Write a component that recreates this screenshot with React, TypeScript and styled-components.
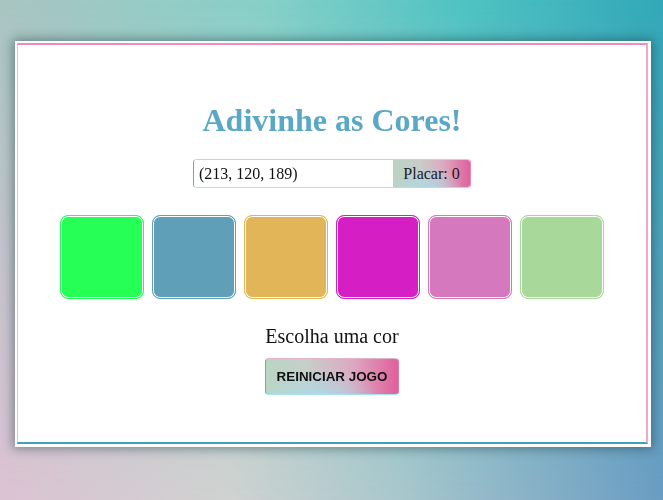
import React from 'react';
import styled, { createGlobalStyle } from 'styled-components';

const GlobalStyle = createGlobalStyle`
  html, body {
    margin: 0;
    padding: 0;
    min-height: 100%;
  }
  body {
    height: 500px;
    overflow: hidden;
    font-family: "Liberation Serif", "Times New Roman", serif;
    background: linear-gradient(to right, #a9c5c2 0%, #86d0c8 40%, #4fc3c3 70%, #32a8b8 100%);
    position: relative;
  }
  body::before {
    content: '';
    position: fixed;
    inset: 0;
    background: linear-gradient(to right, #dcc2d3 0%, #cfd2d0 35%, #a9c7cc 60%, #6a9cc2 100%);
    -webkit-mask-image: linear-gradient(to bottom, transparent 0%, rgba(0,0,0,0.5) 50%, #000 100%);
    mask-image: linear-gradient(to bottom, transparent 0%, rgba(0,0,0,0.5) 50%, #000 100%);
    z-index: 0;
  }
  #root {
    position: relative;
    z-index: 1;
  }
`;

const Page = styled.div`
  display: flex;
  padding: 41px 0 0 15px;
`;

const Card = styled.div`
  width: 636px;
  box-sizing: border-box;
  background: #fff;
  padding: 2px 3px 3px 2px;
  box-shadow: 0 0 10px 2px rgba(20, 50, 60, 0.45);
`;

const Frame = styled.div`
  border-style: solid;
  border-width: 2px 2px 2px 1px;
  border-color: #f08cb6 #f3a6cb #3fa0b6 #9fdff0;
  padding: 57px 0 47px;
  display: flex;
  flex-direction: column;
  align-items: center;
`;

const Title = styled.h1`
  margin: 0;
  font-size: 32px;
  line-height: 37px;
  font-weight: bold;
  color: #5aa8c6;
`;

const Controls = styled.div`
  margin-top: 20px;
  display: flex;
  height: 29px;
  box-sizing: border-box;
  border: 1px solid;
  border-color: #f4bcd2 #ee89b6 #a6e2ef #5ab0c8;
  border-radius: 4px;
  overflow: hidden;
`;

const ColorInput = styled.input`
  width: 199px;
  box-sizing: border-box;
  border: none;
  outline: none;
  padding: 0 5px;
  font-family: "Liberation Serif", serif;
  font-size: 16px;
  color: #111;
  background: #fff;
`;

const Score = styled.div`
  width: 77px;
  display: flex;
  align-items: center;
  justify-content: center;
  font-size: 16px;
  color: #1a1a1a;
  background:
    radial-gradient(ellipse at 45% 120%, rgba(166, 222, 236, 0.9) 0%, rgba(166, 222, 236, 0) 60%),
    linear-gradient(to right, #b9d3c3 0%, #c9ccc8 35%, #dcaac0 65%, #e0609c 100%);
`;

const Grid = styled.div`
  margin-top: 27px;
  display: flex;
  gap: 8px;
`;

const Swatch = styled.div<{ $color: string }>`
  width: 84px;
  height: 84px;
  box-sizing: border-box;
  border-radius: 8px;
  border: 1px solid ${p => p.$color};
  background: ${p => p.$color};
  box-shadow: inset 0 0 0 1px #fff;
  cursor: pointer;
`;

const Message = styled.p`
  margin: 26px 0 0;
  font-size: 20px;
  line-height: 23px;
  color: #111;
`;

const ResetButton = styled.button`
  margin-top: 10px;
  width: 134px;
  height: 37px;
  box-sizing: border-box;
  border: 1px solid;
  border-color: #e2b4c8 #e07aa8 #a6e2ef #5ab0c8;
  border-radius: 4px;
  font-family: "Liberation Sans", Arial, sans-serif;
  font-weight: bold;
  font-size: 13.4px;
  color: #111;
  cursor: pointer;
  background:
    radial-gradient(ellipse at 40% 120%, rgba(166, 222, 236, 0.9) 0%, rgba(166, 222, 236, 0) 55%),
    linear-gradient(to right, #b9d5c4 0%, #c6cfc9 30%, #dcaac0 65%, #e0609c 100%);
`;

const colors = [
  'rgb(38, 255, 85)',
  'rgb(95, 160, 184)',
  'rgb(226, 182, 88)',
  'rgb(213, 31, 197)',
  'rgb(213, 120, 189)',
  'rgb(168, 217, 154)',
];

const App: React.FC = () => {
  return (
    <>
      <GlobalStyle />
      <Page>
        <Card>
          <Frame>
            <Title>Adivinhe as Cores!</Title>
            <Controls>
              <ColorInput readOnly value="(213, 120, 189)" />
              <Score>Placar: 0</Score>
            </Controls>
            <Grid>
              {colors.map((c, i) => (
                <Swatch key={i} $color={c} />
              ))}
            </Grid>
            <Message>Escolha uma cor</Message>
            <ResetButton>REINICIAR JOGO</ResetButton>
          </Frame>
        </Card>
      </Page>
    </>
  );
};

export default App;
